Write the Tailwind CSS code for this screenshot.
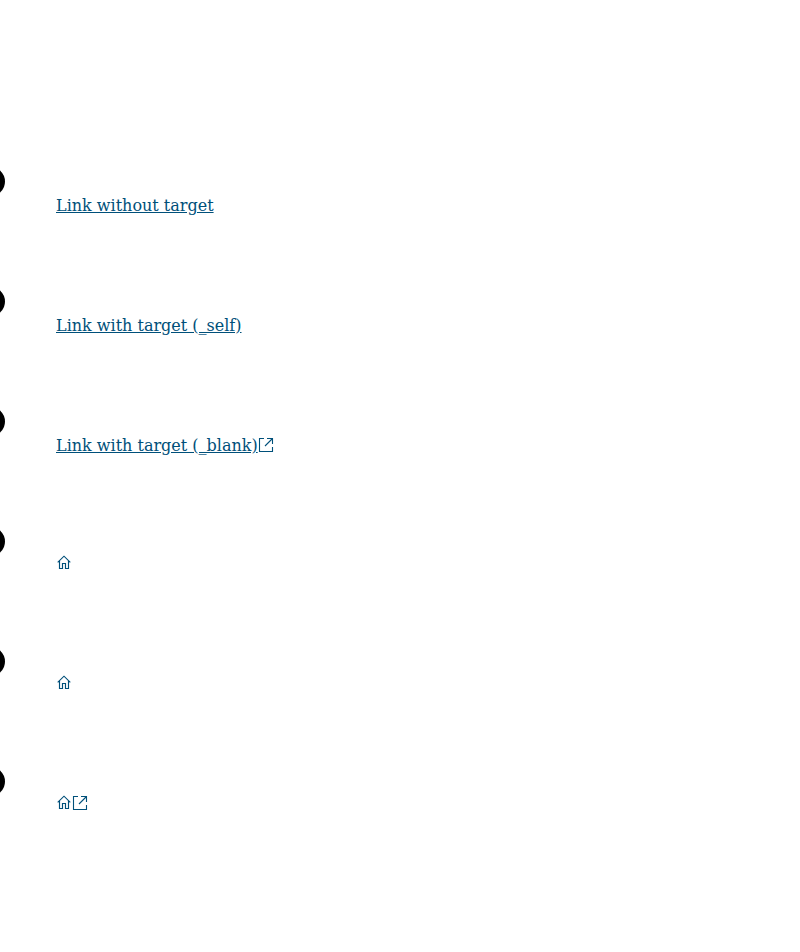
<!DOCTYPE html>
<html lang="en"><head><meta charset="utf-8"><title>Links</title>
<script src="https://cdn.jsdelivr.net/npm/@tailwindcss/browser@4"></script></head>
<body class="bg-white overflow-hidden">
<svg class="hidden"><symbol id="home" viewBox="0 0 16 16"><path d="M1.700 8.300 8 2.200l6.300 6.100M3.500 7v7.500h3V9.500h3v5h3V7" fill="none" stroke="currentColor" stroke-width="1.150"/></symbol>
<symbol id="ext" viewBox="0 0 16 16"><path d="M6 1.500H1.500v13h13V10M9 1.500h5.500V7M14.500 1.500 7 9" fill="none" stroke="currentColor" stroke-width="1.100"/></symbol></svg>
<ul class="pt-[167px] text-base text-[#00507a] [font-family:'DejaVu_Serif',serif]">
<li class="flex h-[120px]"><span class="-ml-[24px] h-[29px] w-[29px] rounded-full bg-black"></span><a class="ml-[51px] mt-[27px] underline underline-offset-[1px]" href="#">Link without target</a></li>
<li class="flex h-[120px]"><span class="-ml-[24px] h-[29px] w-[29px] rounded-full bg-black"></span><a class="ml-[51px] mt-[27px] underline underline-offset-[1px]" href="#">Link with target (_self)</a></li>
<li class="flex h-[120px]"><span class="-ml-[24px] h-[29px] w-[29px] rounded-full bg-black"></span><a class="ml-[51px] mt-[27px] underline underline-offset-[1px]" href="#">Link with target (_blank)</a><svg class="mt-[30px] h-4 w-4"><use href="#ext"/></svg></li>
<li class="flex h-[120px]"><span class="-ml-[24px] h-[29px] w-[29px] rounded-full bg-black"></span><a class="ml-[51px] mt-[27px]" href="#"><svg class="h-4 w-4"><use href="#home"/></svg></a></li>
<li class="flex h-[120px]"><span class="-ml-[24px] h-[29px] w-[29px] rounded-full bg-black"></span><a class="ml-[51px] mt-[27px]" href="#"><svg class="h-4 w-4"><use href="#home"/></svg></a></li>
<li class="flex h-[120px]"><span class="-ml-[24px] h-[29px] w-[29px] rounded-full bg-black"></span><a class="ml-[51px] mt-[27px] flex" href="#"><svg class="h-4 w-4"><use href="#home"/></svg><svg class="mt-px h-4 w-4"><use href="#ext"/></svg></a></li>
</ul></body></html>
